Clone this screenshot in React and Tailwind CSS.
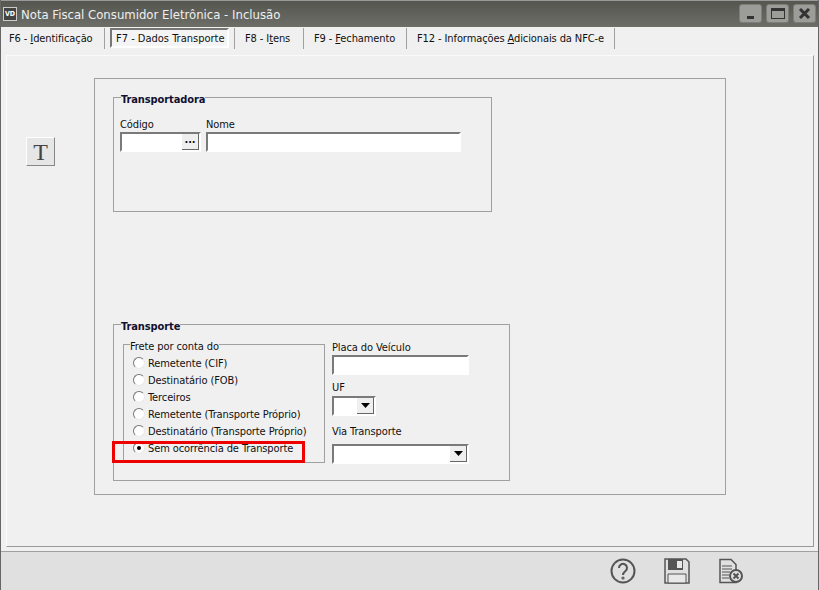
import React from "react";

const font = "font-['DejaVu_Sans_Condensed','DejaVu_Sans',sans-serif]";
const sunken = "border-2 border-t-[#7a7a7a] border-l-[#7a7a7a] border-r-white border-b-white bg-white";

const tabs = [
  { pre: "F6 - ", key: "I", post: "dentificação", w: "w-[104px]", pad: "pl-[8px]" },
  { label: "F7 - Dados Transporte", active: true },
  { pre: "F8 - I", key: "t", post: "ens", w: "w-[69px]", pad: "pl-[10px]" },
  { pre: "F9 - ", key: "F", post: "echamento", w: "w-[103px]", pad: "pl-[10px]" },
  { pre: "F12 - Informações ", key: "A", post: "dicionais da NFC-e", w: "w-[208px]", pad: "pl-[10px]" },
];

const freteOptions = [
  "Remetente (CIF)",
  "Destinatário (FOB)",
  "Terceiros",
  "Remetente (Transporte Próprio)",
  "Destinatário (Transporte Próprio)",
  "Sem ocorrência de Transporte",
];

function WinButton({ children }) {
  return (
    <div className="w-[23px] h-[19px] rounded-[3px] bg-[#9c9c98] border border-[#7d7d79] flex items-center justify-center">
      {children}
    </div>
  );
}

function Tab({ tab }) {
  if (tab.active) {
    return (
      <div className="w-[130px] h-[21px] shrink-0 border-r border-[#a0a0a0] pl-[5px]">
        <div className="w-[119px] h-[20px] border-2 border-t-[#777] border-l-[#777] border-r-white border-b-white flex items-center pl-[4px] tracking-normal bg-[#f4f4f4]">
          {tab.label}
        </div>
      </div>
    );
  }
  return (
    <div className={`${tab.w} ${tab.pad} h-[21px] shrink-0 border-r border-[#a0a0a0] flex items-center`}>
      <span>
        {tab.pre}
        <span className="underline">{tab.key}</span>
        {tab.post}
      </span>
    </div>
  );
}

function Radio({ checked }) {
  return (
    <div className="w-[12px] h-[12px] rounded-full border border-t-[#777] border-l-[#777] border-r-[#e8e8e8] border-b-[#e8e8e8] bg-white flex items-center justify-center shrink-0">
      {checked && <div className="w-[4px] h-[4px] rounded-full bg-black" />}
    </div>
  );
}

function DropArrow() {
  return (
    <div className="w-[17px] h-full bg-[#efefef] border-r border-b border-[#666] flex items-center justify-center">
      <svg width="9" height="5" viewBox="0 0 9 5">
        <path d="M0 0h9L4.500 5z" fill="#000" />
      </svg>
    </div>
  );
}

export default function App() {
  return (
    <div className={`${font} w-[819px] h-[590px] overflow-hidden flex flex-col bg-[#f0f0f0] border-x border-[#666] text-[11px] tracking-[-0.1px] leading-none text-[#111]`}>
      <div className="h-[27px] shrink-0 bg-gradient-to-b from-[#55564f] to-[#6d6e68] border-t border-[#999] flex items-center pl-[2px] pr-[2px]">
        <div className="w-[14px] h-[14px] border border-[#ccc] bg-[#444] text-white text-[7px] font-bold flex items-center justify-center">
          VD
        </div>
        <div className="ml-[4px] text-[13px] tracking-normal text-[#efefef]">Nota Fiscal Consumidor Eletrônica - Inclusão</div>
        <div className="ml-auto flex gap-[4px] pb-[1px]">
          <WinButton>
            <div className="w-[7px] h-[3px] bg-[#333] mt-[8px]" />
          </WinButton>
          <WinButton>
            <div className="w-[14px] h-[11px] border border-[#333] border-t-[3px]" />
          </WinButton>
          <WinButton>
            <svg width="13" height="11" viewBox="0 0 13 11">
              <path d="M2 1l9 9M11 1l-9 9" stroke="#333" strokeWidth="3" />
            </svg>
          </WinButton>
        </div>
      </div>

      <div className="h-[28px] shrink-0 flex items-start pt-[1px]">
        {tabs.map((t, i) => (
          <Tab key={i} tab={t} />
        ))}
      </div>

      <div className="h-[492px] ml-[5px] mr-[4px] shrink-0 border border-[#999] border-t-[#fafafa] border-l-[#fafafa] flex">
        <div className="w-[87px] shrink-0 pl-[19px] pt-[81px]">
          <div className="w-[29px] h-[29px] bg-[#e6e6e6] border border-t-[#fff] border-l-[#fff] border-r-[#888] border-b-[#888] flex items-center justify-center text-[24px] text-[#444] font-['Liberation_Serif',serif]">
            T
          </div>
        </div>

        <div className="w-[632px] h-[417px] mt-[22px] border border-[#a0a0a0] pl-[18px] pt-[18px]">
          <div className="w-[379px] h-[115px] border border-[#a0a0a0] pl-[6px]">
            <div className="-mt-[4px] ml-[1px] w-fit bg-[#f0f0f0] font-bold text-[#101030]">Transportadora</div>
            <div className="flex gap-[5px] mt-[14px]">
              <div className="flex flex-col gap-[2px]">
                <span>Código</span>
                <div className={`${sunken} w-[81px] h-[20px] flex justify-end`}>
                  <div className="w-[17px] h-full bg-[#efefef] border-r border-b border-[#666] text-[11px] font-bold flex items-center justify-center pb-[4px]">
                    ...
                  </div>
                </div>
              </div>
              <div className="flex flex-col gap-[2px]">
                <span>Nome</span>
                <div className={`${sunken} w-[255px] h-[20px]`} />
              </div>
            </div>
          </div>

          <div className="w-[397px] h-[157px] mt-[112px] border border-[#a0a0a0] pl-[9px] flex">
            <div className="w-[202px]">
              <div className="-mt-[4px] -ml-[2px] w-fit bg-[#f0f0f0] font-bold text-[#101030]">Transporte</div>
              <div className="relative w-[202px] h-[119px] mt-[12px] border border-[#a0a0a0] pl-[9px]">
                <div className="-mt-[4px] -ml-[3px] w-fit bg-[#f0f0f0]">Frete por conta do</div>
                <div className="flex flex-col gap-[5px] mt-[5px]">
                  {freteOptions.map((o, i) => (
                    <div key={o} className="h-[12px] flex items-center gap-[3px] whitespace-nowrap">
                      <Radio checked={i === 5} />
                      <span>{o}</span>
                    </div>
                  ))}
                </div>
                <div className="absolute left-[-12px] top-[96px] w-[193px] h-[22px] border-[3px] border-[#ee0000]" />
              </div>
            </div>
            <div className="ml-[7px] pt-[17px] flex flex-col">
              <span>Placa do Veículo</span>
              <div className={`${sunken} w-[137px] h-[20px] mt-[2px]`} />
              <span className="mt-[7px]">UF</span>
              <div className={`${sunken} w-[44px] h-[20px] mt-[3px] flex justify-end`}>
                <DropArrow />
              </div>
              <span className="mt-[10px]">Via Transporte</span>
              <div className={`${sunken} w-[137px] h-[20px] mt-[7px] flex justify-end`}>
                <DropArrow />
              </div>
            </div>
          </div>
        </div>
      </div>

      <div className="flex-1 mt-[4px] bg-[#e0e0e0] border-t border-[#a0a0a0] flex items-center justify-end gap-[28px] pr-[74px]">
        <svg width="26" height="26" viewBox="0 0 26 26" fill="none" stroke="#555" strokeWidth="2">
          <circle cx="13" cy="13" r="11.500" />
          <path d="M9 10a4 4 0 1 1 6.500 3c-1.600 1.300-2.500 2-2.500 4" />
          <circle cx="13" cy="20" r="0.600" />
        </svg>
        <svg width="26" height="26" viewBox="0 0 26 26">
          <path d="M2 1h20l3 3v21H1V1z" fill="#e0e0e0" stroke="#555" strokeWidth="1.500" />
          <path d="M4 1h15v11H4z" fill="#555" />
          <path d="M13 3h5v7h-5z" fill="#e8e8e8" />
          <path d="M4 16h18v9H4z" fill="#e8e8e8" stroke="#555" />
        </svg>
        <svg width="26" height="26" viewBox="0 0 26 26" fill="none" stroke="#555">
          <path d="M2 1.500h11l5 5v18H2z" strokeWidth="1.500" />
          <path d="M4 8h10M4 11h10M4 14h8M4 17h7M4 20h7" />
          <circle cx="18" cy="18" r="6" fill="#e0e0e0" strokeWidth="2" />
          <path d="M15.500 15.500l5 5M20.500 15.500l-5 5" strokeWidth="2" />
        </svg>
      </div>
    </div>
  );
}
